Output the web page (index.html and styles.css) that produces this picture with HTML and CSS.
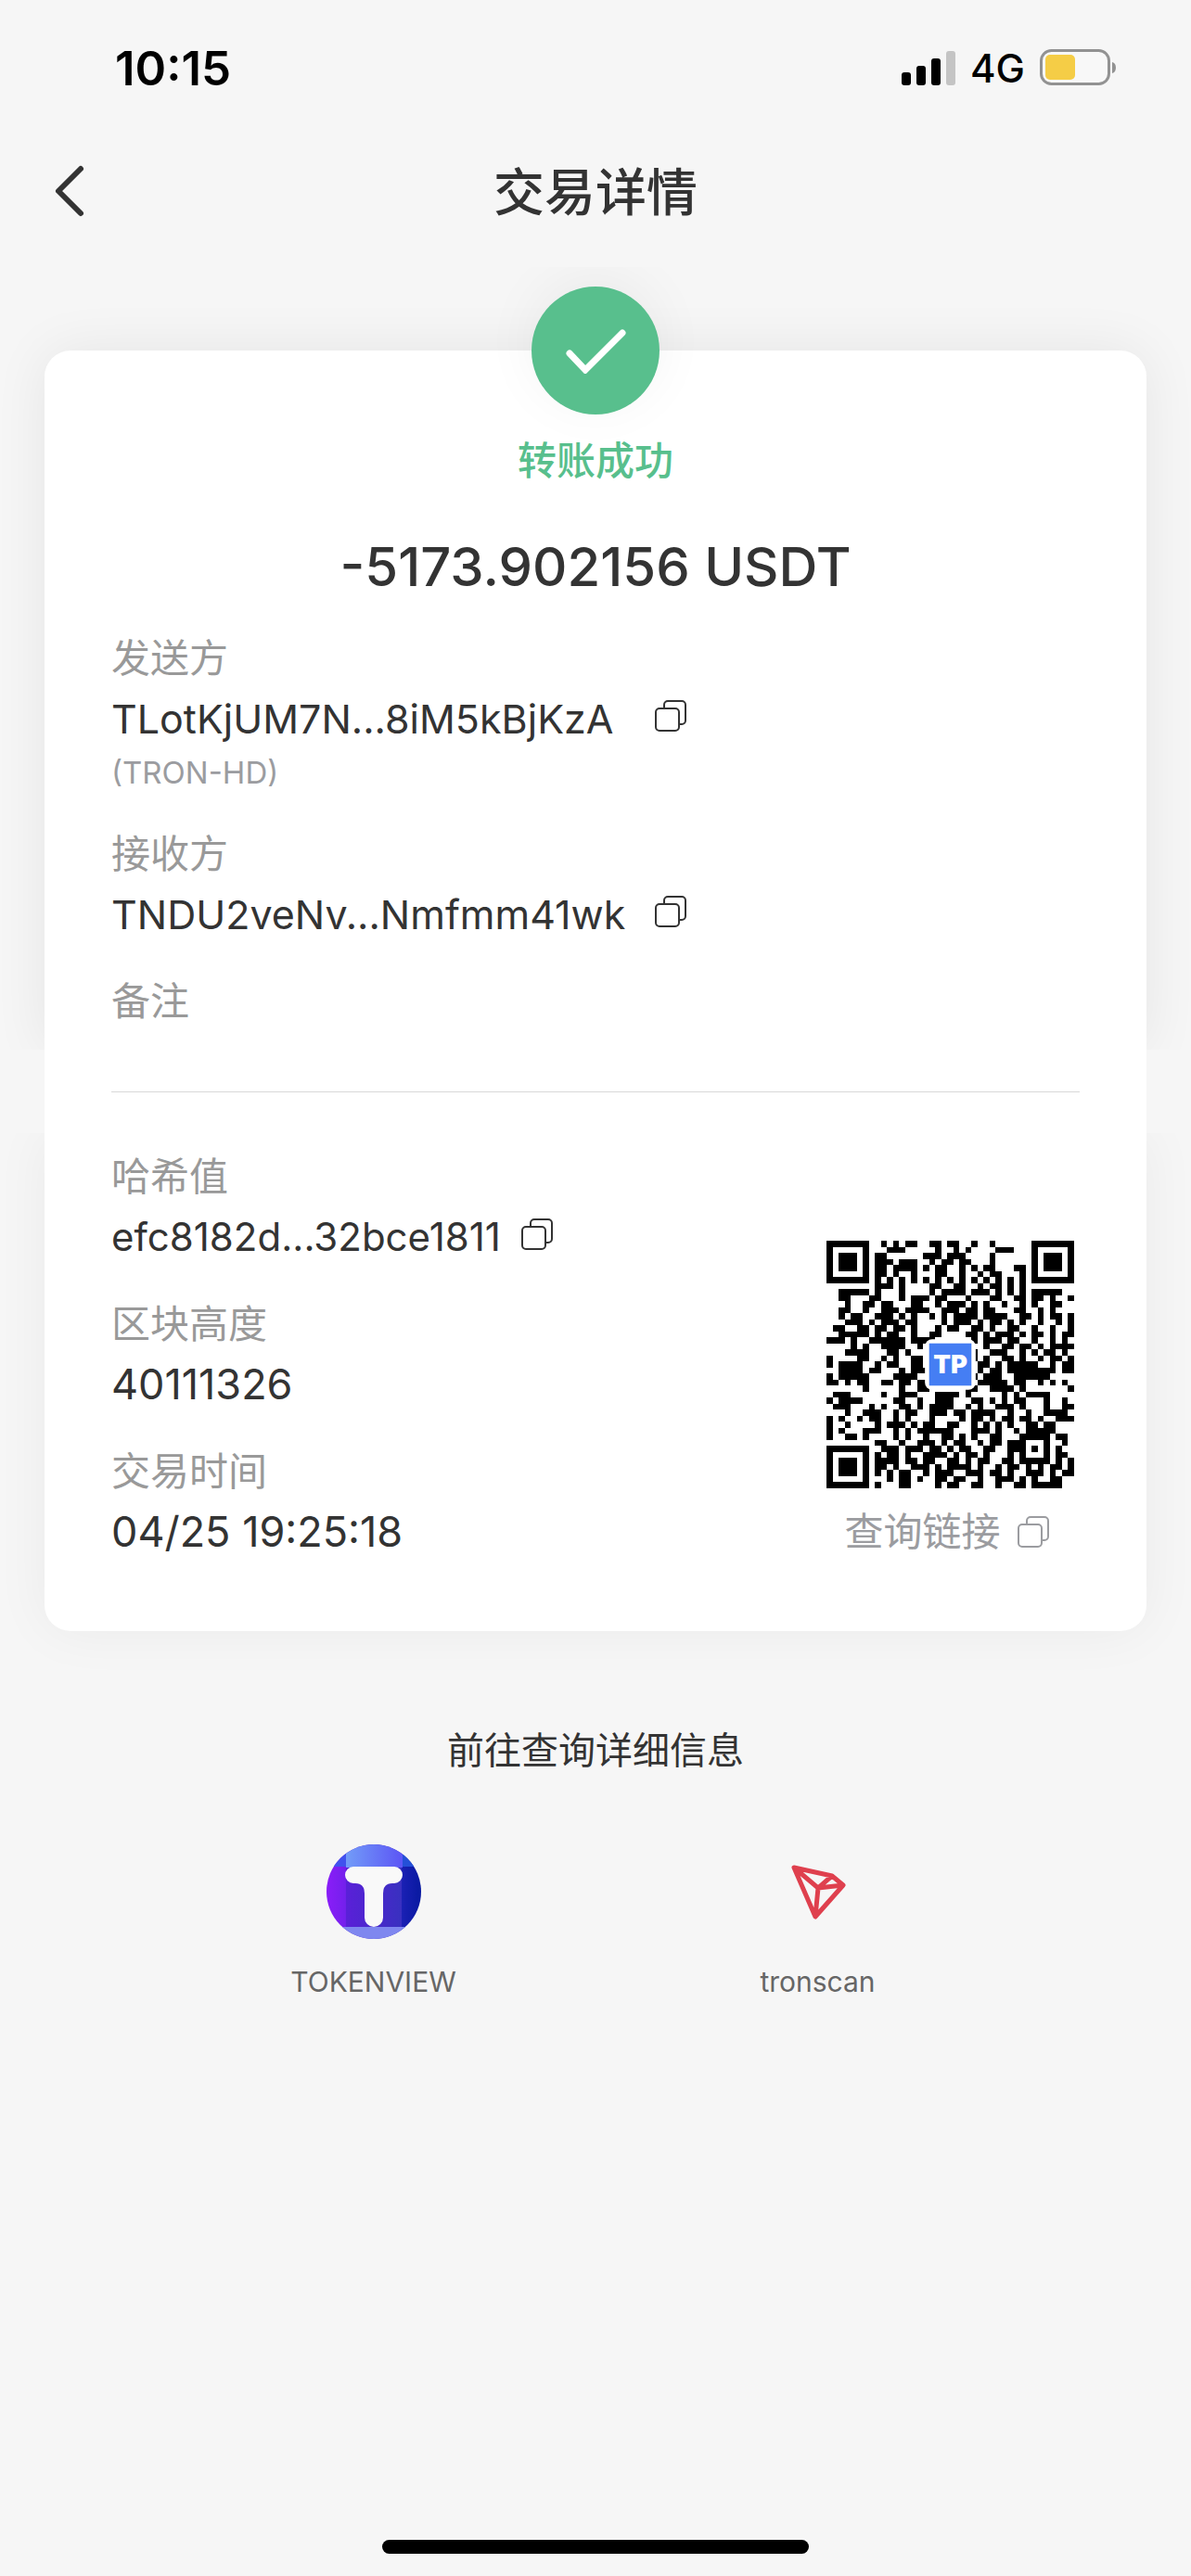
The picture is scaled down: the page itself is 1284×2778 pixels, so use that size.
FILE: index.html
```html
<!DOCTYPE html>
<html lang="zh-CN">
<head>
    <meta charset="UTF-8">
    <meta name="viewport" content="width=device-width, initial-scale=1.0">
    <title>交易详情</title>
    <link rel="stylesheet" href="styles.css">
</head>
<body>
    <!-- Shared copy icon -->
    <svg class="symbols" aria-hidden="true">
        <symbol id="copy" viewBox="0 0 34 34">
            <path d="M10 9V5a4 4 0 0 1 4-4h15a4 4 0 0 1 4 4v17a4 4 0 0 1-4 4h-3" />
            <rect x="1" y="9" width="25" height="24" rx="4" />
        </symbol>
    </svg>

    <div class="status-bar">
        <span class="time">10:15</span>
        <div class="status-icons">
            <svg width="58" height="38" viewBox="0 0 58 38" aria-hidden="true">
                <rect x="0" y="24" width="10" height="14" rx="3" />
                <rect x="16" y="17" width="10" height="21" rx="3" />
                <rect x="32" y="9" width="10" height="29" rx="3" />
                <rect x="48" y="1" width="10" height="37" rx="3" fill="#c4c4c4" />
            </svg>
            <span class="network">4G</span>
            <svg width="83" height="40" viewBox="0 0 83 40" aria-hidden="true">
                <rect x="1.5" y="1.5" width="73" height="36" rx="11" fill="#f8f8f8" stroke="#929292" stroke-width="3" />
                <rect x="6" y="6" width="32" height="27" rx="5" fill="#f5cd46" />
                <path d="M78 14q4 1 4 6t-4 6z" fill="#929292" />
            </svg>
        </div>
    </div>

    <header class="nav">
        <button class="back" type="button" aria-label="返回">
            <svg width="34" height="58" viewBox="0 0 34 58" aria-hidden="true">
                <path d="M29 5 5 29l24 24" />
            </svg>
        </button>
        <h1>交易详情</h1>
    </header>

    <main>
        <section class="card card-top">
            <div class="badge">
                <svg width="66" height="50" viewBox="0 0 66 50" aria-hidden="true">
                    <path d="M5 28 22 46 62 6" />
                </svg>
            </div>
            <p class="result">转账成功</p>
            <p class="amount">-5173.902156 USDT</p>

            <div class="rows">
                <div class="row">
                    <div class="label">发送方</div>
                    <div class="value">
                        <span class="address">TLotKjUM7N...8iM5kBjKzA</span>
                        <button class="copy" type="button" aria-label="复制发送方"><svg><use href="#copy" /></svg></button>
                    </div>
                    <div class="wallet">(TRON-HD)</div>
                </div>
                <div class="row">
                    <div class="label">接收方</div>
                    <div class="value">
                        <span class="address">TNDU2veNv...Nmfmm41wk</span>
                        <button class="copy" type="button" aria-label="复制接收方"><svg><use href="#copy" /></svg></button>
                    </div>
                </div>
                <div class="row">
                    <div class="label">备注</div>
                </div>
            </div>
        </section>

        <div class="seam"><hr></div>

        <section class="card card-bottom">
            <div class="rows">
                <div class="row">
                    <div class="label">哈希值</div>
                    <div class="value hash">
                        <span>efc8182d...32bce1811</span>
                        <button class="copy" type="button" aria-label="复制哈希值"><svg><use href="#copy" /></svg></button>
                    </div>
                </div>
                <div class="row">
                    <div class="label">区块高度</div>
                    <div class="value">40111326</div>
                </div>
                <div class="row">
                    <div class="label">交易时间</div>
                    <div class="value">04/25 19:25:18</div>
                </div>
            </div>
            <div class="qr-box">
                <svg class="qr" viewBox="0 0 410 410" role="img" aria-label="查询链接二维码">
                    <path id="qrModules" />
                    <rect x="163" y="163" width="84" height="84" rx="12" fill="#fff" />
                    <rect x="170" y="170" width="70" height="70" fill="#457ef3" />
                    <text x="205" y="220" text-anchor="middle">TP</text>
                </svg>
                <button class="copy-link" type="button">查询链接 <svg><use href="#copy" /></svg></button>
            </div>
        </section>
    </main>

    <section class="explorers">
        <h2>前往查询详细信息</h2>
        <div class="explorer-list">
            <a href="#tokenview">
                <svg viewBox="0 0 102 102" aria-hidden="true">
                    <defs>
                        <linearGradient id="tvBody">
                            <stop offset="0" stop-color="#8a1df8" />
                            <stop offset="0.2" stop-color="#7420ec" />
                            <stop offset="0.21" stop-color="#5a20d8" />
                            <stop offset="0.79" stop-color="#3930c0" />
                            <stop offset="0.8" stop-color="#1a20b4" />
                            <stop offset="1" stop-color="#0819a0" />
                        </linearGradient>
                        <linearGradient id="tvTop">
                            <stop offset="0" stop-color="#729cf8" />
                            <stop offset="1" stop-color="#5c55f5" />
                        </linearGradient>
                        <clipPath id="tvClip"><circle cx="51" cy="51" r="51" /></clipPath>
                    </defs>
                    <g clip-path="url(#tvClip)">
                        <rect width="102" height="102" fill="url(#tvBody)" />
                        <rect width="21" height="24" fill="#4052ee" />
                        <rect x="82" width="20" height="24" fill="#2450d8" />
                        <rect x="21" width="61" height="25" fill="url(#tvTop)" />
                        <rect y="89" width="102" height="13" fill="#7f87ef" />
                        <path fill="#f9f9f9" d="M29 24h44a9 9 0 0 1 0 18h-2q-10 0-10 11v26a10 10 0 0 1-20 0V53q0-11-10-11h-2a9 9 0 0 1 0-18z" />
                    </g>
                </svg>
                <span>TOKENVIEW</span>
            </a>
            <a href="#tronscan">
                <svg viewBox="0 0 102 102" aria-hidden="true">
                    <path class="tron" d="M25 25 66 34 78 44 48 78zM25 25 51 47 48 78M51 47 78 44M51 47 66 34" />
                </svg>
                <span>tronscan</span>
            </a>
        </div>
    </section>

    <div class="home-bar"></div>

    <script src="script.js"></script>
</body>
</html>
```
FILE: styles.css
```css
* {
    box-sizing: border-box;
}

body {
    margin: 0;
    min-height: 100vh;
    display: flex;
    flex-direction: column;
    background-color: #f6f6f6;
    color: #333;
    font-family: Inter, "Noto Sans CJK SC", sans-serif;
}

h1,
h2,
p {
    margin: 0;
}

button {
    padding: 0;
    border: 0;
    background: none;
    color: inherit;
    font: inherit;
}

svg {
    display: block;
    flex-shrink: 0;
}

.symbols {
    position: absolute;
    width: 0;
    height: 0;
}

/* Status bar */
.status-bar {
    height: 146px;
    padding: 0 80px 0 124px;
    display: flex;
    align-items: center;
    justify-content: space-between;
    color: #000;
}

.time {
    font-size: 51px;
    font-weight: 600;
}

.status-icons {
    display: flex;
    align-items: center;
    gap: 16px;
}

.network {
    font-size: 42px;
    font-weight: 500;
}

/* Title bar */
.nav {
    height: 120px;
    padding: 0 58px;
    display: grid;
    grid-template-columns: 1fr auto 1fr;
    align-items: center;
}

.back path {
    fill: none;
    stroke: #333;
    stroke-width: 6;
    stroke-linecap: round;
    stroke-linejoin: round;
}

.nav h1 {
    padding-bottom: 6px;
    font-size: 55px;
    font-weight: 500;
}

/* Card */
main {
    margin: 112px 48px 0;
}

.card {
    padding: 0 72px;
    background-color: #fff;
}

.card-top {
    border-radius: 28px 28px 0 0;
    box-shadow: 0 0 60px rgba(0, 0, 0, 0.07);
    clip-path: inset(-90px -90px 0 -90px);
    padding-bottom: 22px;
}

.badge {
    width: 138px;
    height: 138px;
    margin: 0 auto;
    transform: translateY(-50%);
    margin-bottom: -49px;
    border-radius: 50%;
    background-color: #58bf8d;
    box-shadow: 0 -10px 60px rgba(0, 0, 0, 0.05);
    display: flex;
    align-items: center;
    justify-content: center;
}

.badge path {
    fill: none;
    stroke: #fff;
    stroke-width: 7;
    stroke-linecap: round;
}

.result {
    color: #58bf8d;
    font-size: 42px;
    font-weight: 500;
    line-height: 60px;
    text-align: center;
}

.amount {
    margin: 42px 0 27px;
    font-size: 58px;
    font-weight: 500;
    line-height: 84px;
    text-align: center;
}

.rows {
    display: flex;
    flex-direction: column;
    gap: 29px;
}

.label {
    color: #999;
    font-size: 42px;
    line-height: 60px;
}

.value {
    display: flex;
    align-items: center;
    gap: 22px;
    font-size: 45px;
    line-height: 70px;
}

.address {
    min-width: 564px;
    font-size: 43px;
}

.hash {
    font-size: 42px;
}

.wallet {
    margin-bottom: 6px;
    color: #9b9ca0;
    font-size: 33px;
    line-height: 46px;
}

.copy svg,
.copy-link svg {
    width: 34px;
    height: 34px;
    fill: none;
    stroke: currentColor;
    stroke-width: 2;
    overflow: visible;
}

.copy {
    padding-bottom: 6px;
}

.seam {
    height: 90px;
    padding: 45px 72px;
    background-color: #fff;
}

.seam hr {
    margin: 0;
    border: 0;
    border-top: 1px solid #d8d8d8;
}

.card-bottom {
    display: flex;
    justify-content: space-between;
    align-items: flex-end;
    padding-top: 17px;
    padding-bottom: 72px;
    border-radius: 0 0 28px 28px;
    box-shadow: 0 0 60px rgba(0, 0, 0, 0.05);
    clip-path: inset(0 -90px -90px -90px);
}

.qr-box {
    padding-right: 6px;
    display: flex;
    flex-direction: column;
    align-items: center;
    gap: 12px;
}

.qr {
    width: 267px;
    height: 267px;
}

.qr path {
    shape-rendering: crispEdges;
}

.qr text {
    fill: #fff;
    font-size: 42px;
    font-weight: 900;
}

.copy-link {
    padding-right: 8px;
    display: flex;
    align-items: center;
    gap: 18px;
    color: #9b9ca0;
    font-size: 42px;
    line-height: 70px;
}

/* Block explorers */
.explorers {
    padding: 99px 163px 0;
    text-align: center;
}

.explorers h2 {
    font-size: 40px;
    font-weight: 400;
    line-height: 60px;
}

.explorer-list {
    margin-top: 71px;
    display: grid;
    grid-template-columns: 1fr 1fr;
}

.explorer-list a {
    display: flex;
    flex-direction: column;
    align-items: center;
    gap: 22px;
    color: #666;
    font-size: 30px;
    line-height: 48px;
    text-decoration: none;
}

.explorer-list svg {
    width: 102px;
    height: 102px;
}

.tron {
    fill: none;
    stroke: #df404e;
    stroke-width: 5;
    stroke-linejoin: round;
}

.home-bar {
    width: 460px;
    height: 15px;
    margin: auto auto 24px;
    border-radius: 8px;
    background-color: #000;
}
```
FILE: script.js
```js
// QR modules, one string per row
var rows = [
    "#######..#.#.##..##.##..#..#......#######",
    "#.....#...###.....#..#.#....###...#.....#",
    "#.###.#.##......###.###....#......#.###.#",
    "#.###.#.###.###..#.##.##...#......#.###.#",
    "#.###.#.##.####.#.##..#.#.##...##.#.###.#",
    "#.....#.##.#..#...##..#..#.##...#.#.....#",
    "#######.#.#.#.#.#.#.#.#.#.#.#.#.#.#######",
    "........###.#....##..##..#.##.#.#........",
    "..#####.#...#....#.####.###.#.#.#.#####..",
    "..##...##...#.###.##...#...##..##.##.#..#",
    "...#..##.##...##..#.###.#.#..#..#.#..##..",
    "..##..#..###.####..###.##.##...##..#.#...",
    "..#.##..###.#.#..#.#.####.####..##.#.##.#",
    "...###.#.###.##....#.###.#.##.#.#..#..#.#",
    ".##..##.##.##.#...#.##..##.#..##..#..#..#",
    "..#####.#.##..#..##....##.#.###.#.##.#.##",
    "###.#..######.####......#.###.##..#..#.#.",
    "....#.#..####..#..........#..##.##.#.####",
    "...####...##.#..........#..###..#.#.##.#.",
    "#....##..#.#..##........#.#..##.#..#.##.#",
    "#.####..#.##..##.........##.#.#####..#.##",
    "..####.##...#.###........#.##.########.##",
    "#.#####....####.........#.###..######....",
    "##.#.##..##.##.###.......#####.##..#.#.#.",
    "......#.....#..##......##..####.#.......#",
    ".###.....#..###...####.#.....#.#.####....",
    "#.####.....##..#..###...##.#.#.##...#..#.",
    ".###...#.#..##.#.####..#.#..###.#...#..##",
    "...#..###..#.##..###.##.####..#..#..####.",
    "#.#..#.##..#.#...#....#.##.#.##.##.#..###",
    "#..#....#.###.#.##..##..#.#.#.#..##.##...",
    "#.#...###..#.#.######...###.#..#.#####...",
    "#..##.#....#.#..#..##.#.#..##...#####.##.",
    "........##..#..###.#.##..#.##.###...#..#.",
    "#######..###.###.##.#.##..##..###.#.#.#..",
    "#.....#.#.##.#..####.#.##.#...#.#...#.##.",
    "#.###.#.####.##.##..##.#.##..##.#####.#.#",
    "#.###.#.##.#..###.#.####.#..#.##.#.#.##.#",
    "#.###.#.#.#.##..#.###..###.##.#..###.#.##",
    "#.....#...#.##.#..##.##..#..###.#.#..##..",
    "#######.#...##....#.##..##..#..##.#####.."
];

var d = "";
rows.forEach(function (row, y) {
    for (var x = 0; x < row.length; x++) {
        if (row[x] === "#") {
            d += "M" + x * 10 + " " + y * 10 + "h10v10h-10z";
        }
    }
});
document.getElementById("qrModules").setAttribute("d", d);
```
